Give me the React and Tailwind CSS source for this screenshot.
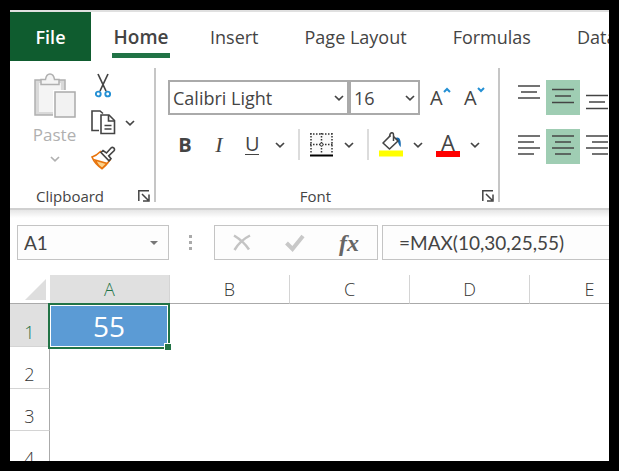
import React from "react";

const tabs = ["Insert", "Page Layout", "Formulas", "Data"];
const columns = ["A", "B", "C", "D", "E"];
const rows = [1, 2, 3, 4];

function Chevron({ className = "text-[#444]" }) {
  return (
    <svg width="10" height="8" viewBox="0 0 10 8" fill="none" stroke="currentColor" strokeWidth="1.7" className={className} aria-hidden="true">
      <path d="M1 2l4 3.8L9 2" />
    </svg>
  );
}

function MenuButton({ label, className }) {
  return (
    <button type="button" aria-label={label} className={`flex h-8 w-[10px] items-center justify-center ${className || ""}`}>
      <Chevron />
    </button>
  );
}

function Launcher({ label }) {
  return (
    <button type="button" aria-label={label} className="block">
      <svg width="12" height="12" viewBox="0 0 12 12" fill="none" stroke="#444" strokeWidth="1.5">
        <path d="M11 .8H.8V11M4 4l6 6M11 4.500V11H5" />
      </svg>
    </button>
  );
}

function PasteIcon() {
  return (
    <svg width="42" height="46" viewBox="0 0 42 46" fill="none" aria-hidden="true">
      <path d="M1 7h30v35H1z" fill="#d9d9d9" stroke="#b0b0b0" strokeWidth="1.5" />
      <path d="M5 10h22v29H5z" fill="#f4f4f4" />
      <path d="M7 11.500V6.500h4.500C12 3 13.500 1 16 1s4 2 4.500 5.500H25v5z" fill="#f4f4f4" stroke="#b0b0b0" strokeWidth="1.5" />
      <path d="M19 17h23v28H19z" fill="#fff" />
      <path d="M21 19h20v25H21z" fill="#f2f2f2" stroke="#aaa" strokeWidth="1.5" />
    </svg>
  );
}

function CutIcon() {
  return (
    <svg width="16" height="25" viewBox="0 0 16 25" fill="none" aria-hidden="true">
      <path d="M3 1l8 17M13 1L5 18" stroke="#444" strokeWidth="1.7" />
      <circle cx="3.300" cy="21" r="2.400" stroke="#2490d4" strokeWidth="1.900" />
      <circle cx="12.700" cy="21" r="2.400" stroke="#2490d4" strokeWidth="1.900" />
    </svg>
  );
}

function CopyIcon() {
  return (
    <svg width="25" height="25" viewBox="0 0 25 25" fill="none" stroke="#444" strokeWidth="1.600" aria-hidden="true">
      <path d="M8 20.500H1V1h8L12 3.500" />
      <path d="M10 5h8l5.500 5.500V23.500H10z" fill="#fff" />
      <path d="M17.500 5v6h6M13.500 15.500h7M13.500 19h7" />
    </svg>
  );
}

function BrushIcon() {
  return (
    <svg width="25" height="25" viewBox="0 0 25 25" fill="none" strokeWidth="1.600" aria-hidden="true">
      <path d="M9.500 5.500C6.500 8.500 4 10.200 1 11c2 5 5 8.500 10 11.500 3.500-2.500 5.500-5 8-8.500z" fill="#fff" stroke="#e8740c" />
      <path d="M4 14l12 3.500-5 5C8 20.500 6 18 4 14z" fill="#fbd18b" stroke="#e8740c" />
      <path d="M10 6.500l2-2 3.500 2.500 4.500-5c1.700-1.700 4.500.6 3 2.800l-5.300 5 2.300 3-2 2z" fill="#fff" stroke="#444" />
    </svg>
  );
}

function BordersIcon() {
  return (
    <svg width="24" height="24" viewBox="0 0 24 24" fill="none" stroke="#333" aria-hidden="true">
      <path d="M1 1h21v21H1z" fill="#fafafa" stroke="none" />
      <path d="M0 1h23M0 11.500h23M1 0v21M11.500 0v21M22 0v21" strokeWidth="1.500" strokeDasharray="1.500 1.500" />
      <circle cx="11.500" cy="11.500" r="1.500" fill="#fff" />
      <path d="M0 22.500h23" stroke="#000" strokeWidth="2" />
    </svg>
  );
}

function FillIcon() {
  return (
    <svg width="24" height="25" viewBox="0 0 24 25" fill="none" aria-hidden="true">
      <path d="M0 18.500h24v6H0z" fill="#ff0" />
      <path d="M16 6c4-2 6.500 1 5.700 9-1.200-1-2-2.500-2.700-5z" fill="#1569b0" />
      <path d="M11.500 3.500L4 11l6.500 6 8.500-8-4.500-4.500" fill="#fff" stroke="#444" strokeWidth="1.600" strokeLinejoin="round" />
      <path d="M10.500 5c.3-5 4-5.500 4-2v6" stroke="#444" strokeWidth="1.500" />
    </svg>
  );
}

function SizeButton({ label, path }) {
  return (
    <button type="button" aria-label={label} className="flex h-[35px] w-[22px] items-center text-xl text-[#444]">
      <span className="leading-none">A</span>
      <svg width="8" height="6" viewBox="0 0 8 6" fill="none" stroke="#2490d4" strokeWidth="2" className="mb-4 shrink-0" aria-hidden="true">
        <path d={path} />
      </svg>
    </button>
  );
}

function AlignButton({ label, lines, active }) {
  return (
    <button type="button" aria-label={label} aria-pressed={!!active} className={`h-[35px] w-[34px] shrink-0 ${active ? "bg-[#9fcdb3]" : ""}`}>
      <svg width="34" height="35" viewBox="0 0 34 35" stroke="#444" strokeWidth="1.500" aria-hidden="true">
        {lines.map(([x1, x2, y]) => (
          <path key={y} d={`M${x1} ${y}H${x2}`} />
        ))}
      </svg>
    </button>
  );
}

function Combo({ id, label, value, className }) {
  return (
    <div className={`relative h-[35px] ${className}`}>
      <label htmlFor={id} className="sr-only">{label}</label>
      <select id={id} defaultValue={value} className="h-full w-full appearance-none border-2 border-[#aaa] bg-white pl-[3px] text-lg leading-7 text-[#444] outline-none">
        <option>{value}</option>
      </select>
      <span className="pointer-events-none absolute inset-y-0 right-[5px] flex items-center">
        <Chevron />
      </span>
    </div>
  );
}

function Divider() {
  return <div className="h-[31px] w-[2px] bg-[#dcdcdc]" />;
}

function Ribbon() {
  return (
    <div className="flex h-[147px] shrink-0 pt-[7px] text-[#444]">
      <section className="flex h-[134px] w-[146px] shrink-0 flex-col justify-between border-r-2 border-[#c6c6c6]">
        <div className="flex pt-[5px]">
          <button type="button" className="flex w-[81px] flex-col items-center pl-[8px] text-[#b0b0b0]">
            <PasteIcon />
            <span className="mt-1 text-[17px] leading-6">Paste</span>
            <Chevron className="mt-2 text-[#b0b0b0]" />
          </button>
          <div className="flex flex-col gap-3">
            <button type="button" aria-label="Cut" className="pl-1"><CutIcon /></button>
            <div className="flex h-[25px] items-center gap-[9px]">
              <button type="button" aria-label="Copy"><CopyIcon /></button>
              <MenuButton label="Copy options" />
            </div>
            <button type="button" aria-label="Format Painter" className="-mt-px"><BrushIcon /></button>
          </div>
        </div>
        <div className="flex items-center justify-between pl-[26px] pr-1">
          <h2 className="text-[15px] leading-3">Clipboard</h2>
          <Launcher label="Clipboard settings" />
        </div>
      </section>

      <section className="flex h-[134px] w-[344px] shrink-0 flex-col justify-between border-r-2 border-[#c6c6c6]">
        <div className="pt-3">
          <div className="flex pl-3">
            <Combo id="font-name" label="Font" value="Calibri Light" className="w-[181px]" />
            <Combo id="font-size" label="Font size" value="16" className="w-[71px]" />
            <div className="flex gap-3 pl-[10px]">
              <SizeButton label="Increase font size" path="M1 5l3-3 3 3" />
              <SizeButton label="Decrease font size" path="M1 1l3 3 3-3" />
            </div>
          </div>
          <div className="mt-[14px] flex h-[31px] items-center pl-5">
            <button type="button" aria-label="Bold" className="w-[18px] text-xl font-bold leading-none">B</button>
            <button type="button" aria-label="Italic" className="ml-4 w-[18px] font-['Liberation_Serif',serif] text-[22px] italic leading-none">I</button>
            <button type="button" aria-label="Underline" className="ml-[17px] w-[14px] border-b border-[#444] text-xl leading-5">U</button>
            <MenuButton label="Underline options" className="ml-4" />
            <div className="ml-[13px]"><Divider /></div>
            <button type="button" aria-label="Borders" className="ml-[10px]"><BordersIcon /></button>
            <MenuButton label="Border options" className="ml-[10px]" />
            <div className="ml-[13px]"><Divider /></div>
            <button type="button" aria-label="Fill color" className="ml-[10px]"><FillIcon /></button>
            <MenuButton label="Fill color options" className="ml-[10px]" />
            <button type="button" aria-label="Font color" className="ml-[13px] h-6 w-6 border-b-[6px] border-[red] text-[22px] leading-[18px]">A</button>
            <MenuButton label="Font color options" className="ml-[10px]" />
          </div>
        </div>
        <div className="flex items-center justify-between pr-1">
          <span className="w-3" />
          <h2 className="pl-px pr-5 text-[15px] leading-3">Font</h2>
          <Launcher label="Font settings" />
        </div>
      </section>

      <section className="min-w-0 flex-1 overflow-hidden pl-3 pt-3" aria-label="Alignment">
        <div className="flex">
          <AlignButton label="Top align" lines={[[6, 28, 6], [9, 25, 12], [6, 28, 18]]} />
          <AlignButton label="Middle align" active lines={[[6, 28, 9.5], [9, 25, 16], [6, 28, 22.5]]} />
          <AlignButton label="Bottom align" lines={[[6, 28, 15.5], [9, 25, 22], [6, 28, 28.5]]} />
        </div>
        <div className="mt-[14px] flex">
          <AlignButton label="Align left" lines={[[6, 28, 7], [6, 22, 13], [6, 28, 19], [6, 22, 25]]} />
          <AlignButton label="Center" active lines={[[6, 28, 7], [9, 25, 13], [6, 28, 19], [9, 25, 25]]} />
          <AlignButton label="Align right" lines={[[6, 28, 7], [12, 28, 13], [6, 28, 19], [12, 28, 25]]} />
        </div>
      </section>
    </div>
  );
}

function FormulaBar() {
  return (
    <div className="flex h-[65px] shrink-0 bg-linear-to-b from-[#e6e6e6] to-white to-[8px] pl-[7px] pt-[15px] font-['Lato',sans-serif] text-[19px] text-[#444]">
      <div className="flex h-[35px] w-[152px] shrink-0 items-center justify-between border border-[#c4c4c4] bg-[#fdfdfd] pl-[6px] pr-[10px]">
        <input aria-label="Name box" defaultValue="A1" className="w-20 bg-transparent leading-6 outline-none" />
        <button type="button" aria-label="Named ranges">
          <svg width="8" height="4" viewBox="0 0 8 4" fill="#777" className="block"><path d="M0 0h8L4 4z" /></svg>
        </button>
      </div>
      <div className="ml-5 flex h-[35px] w-[3px] shrink-0 flex-col justify-center gap-[3px]">
        <i className="h-[3px] bg-[#aaa]" />
        <i className="h-[3px] bg-[#aaa]" />
        <i className="h-[3px] bg-[#aaa]" />
      </div>
      <div className="ml-[22px] flex h-[35px] w-[164px] shrink-0 items-center justify-between border border-[#c4c4c4] bg-[#fdfdfd] px-[18px]">
        <button type="button" aria-label="Cancel">
          <svg width="18" height="17" viewBox="0 0 18 17" fill="none" stroke="#c4c4c4" strokeWidth="2.500"><path d="M1 1.500c5 3 11 8 15 14M17 1.500C10 5 5 10 1.500 16" /></svg>
        </button>
        <button type="button" aria-label="Enter">
          <svg width="20" height="18" viewBox="0 0 20 18" fill="none" stroke="#c8c8c8" strokeWidth="4"><path d="M1.500 9l6 6L18 2" /></svg>
        </button>
        <button type="button" aria-label="Insert function" className="font-['Liberation_Serif',serif] text-2xl font-bold italic leading-none text-[#666]">fx</button>
      </div>
      <input aria-label="Formula" defaultValue="=MAX(10,30,25,55)" className="ml-1 h-[35px] min-w-0 flex-1 border border-r-0 border-[#c4c4c4] bg-[#fdfdfd] pl-4 leading-6 outline-none" />
    </div>
  );
}

function Sheet() {
  return (
    <div className="min-h-0 flex-1 overflow-hidden">
      <table className="w-[640px] table-fixed border-separate border-spacing-0 font-['Open_Sans',sans-serif] text-lg font-light text-[#333]">
        <thead>
          <tr className="h-[29px]">
            <th className="w-10 border-b border-[#aaa] p-0" aria-label="Select all">
              <svg width="21" height="21" viewBox="0 0 21 21" className="ml-[15px]"><path d="M21 0v21H0z" fill="#dedede" /></svg>
            </th>
            {columns.map((c) => (
              <th key={c} className={`border-b border-r border-b-[#aaa] border-r-[#d4d4d4] p-0 font-light leading-7 ${c === "A" ? "bg-[#e0e0e0] text-[#217346]" : ""}`}>{c}</th>
            ))}
          </tr>
        </thead>
        <tbody>
          {rows.map((r) => (
            <tr key={r} className="h-[42px]">
              <th className={`border-b border-r border-b-[#d4d4d4] border-r-[#aaa] p-0 align-bottom font-light leading-7 ${r === 1 ? "h-[43px] bg-[#e0e0e0] text-[#217346]" : ""}`}>{r}</th>
              {columns.map((c) => (
                <td key={c} className="p-0 text-center">
                  {r === 1 && c === "A" && (
                    <div className="relative -my-[2px] -ml-[2px] h-[46px] border-2 border-[#217346] bg-white p-px">
                      <div className="h-full bg-[#5b9bd5] text-[28px] font-normal leading-10 text-white">55</div>
                      <span className="absolute -bottom-[3px] -right-[3px] h-[7px] w-[7px] border-l border-t border-white bg-[#217346]" />
                    </div>
                  )}
                </td>
              ))}
            </tr>
          ))}
        </tbody>
      </table>
    </div>
  );
}

export default function App() {
  return (
    <main className="flex h-screen flex-col overflow-hidden border-10 border-black bg-white font-['Open_Sans',sans-serif]">
      <nav className="flex h-[51px] shrink-0 overflow-hidden border-t-2 border-[#e0e0e0] text-lg leading-[50px] text-[#444]">
        <button type="button" className="w-[81px] shrink-0 bg-[#0f5c2f] font-semibold text-white">File</button>
        <button type="button" className="ml-[21px] h-[46px] w-[58px] shrink-0 border-b-[5px] border-[#217346] text-[19px] font-semibold">Home</button>
        <div className="flex shrink-0 gap-[46px] pl-10">
          {tabs.map((t) => (
            <button type="button" key={t} className="whitespace-nowrap">{t}</button>
          ))}
        </div>
      </nav>
      <Ribbon />
      <div className="h-[2px] shrink-0 bg-[#d0d0d0]" />
      <FormulaBar />
      <Sheet />
    </main>
  );
}
